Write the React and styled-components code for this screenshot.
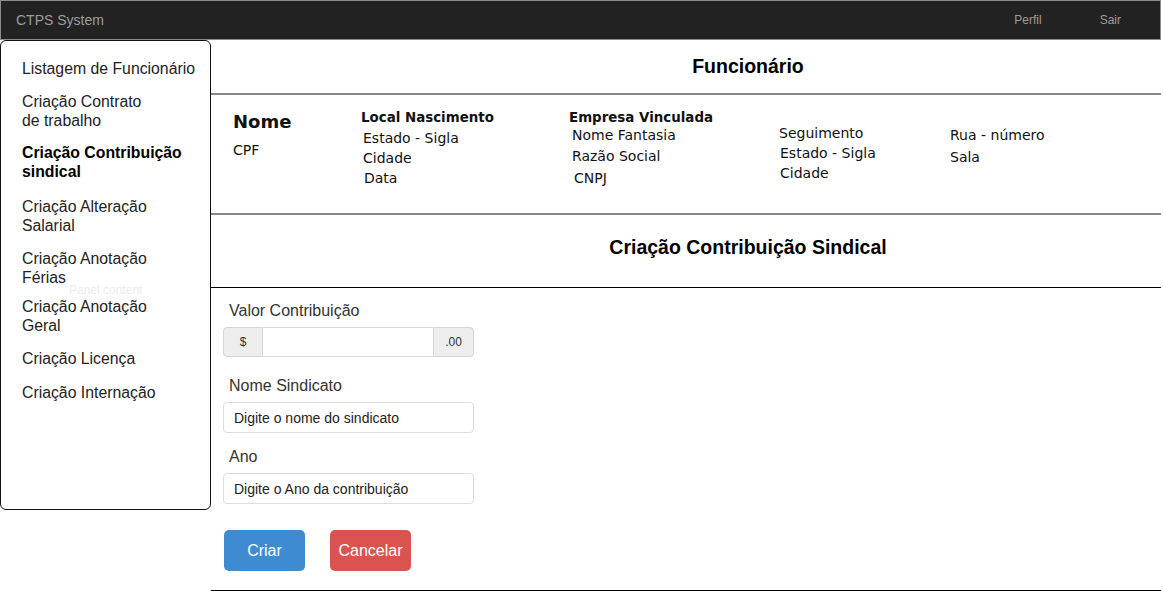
import React from 'react';
import styled, { createGlobalStyle } from 'styled-components';

const Global = createGlobalStyle`
  html, body { margin: 0; padding: 0; background: #fff; }
  body { font-family: "Liberation Sans", Arial, sans-serif; }
  *, *::before, *::after { box-sizing: border-box; }
`;

const Page = styled.div`
  width: 1161px;
`;

const NavBar = styled.header`
  height: 40px;
  background: #222;
  border: 1px solid #8c8c8c;
  display: flex;
  align-items: center;
  padding: 0 39px 0 15px;
`;

const Brand = styled.span`
  flex: 1;
  color: #9d9d9d;
  font-size: 14px;
`;

const NavLinks = styled.nav`
  display: flex;
  gap: 58px;
`;

const NavLink = styled.span`
  color: #9d9d9d;
  font-size: 12px;
`;

const Body = styled.div`
  display: flex;
  align-items: flex-start;
`;

const Sidebar = styled.aside`
  position: relative;
  flex: 0 0 211px;
  height: 470px;
  border: 1px solid #111;
  border-radius: 6px;
  padding: 18px 0 0 21px;
  display: flex;
  flex-direction: column;
`;

const SideItem = styled.div`
  font-size: 15.8px;
  line-height: 19px;
  margin-top: ${p => p.$mt}px;
  color: ${p => (p.$active ? '#000' : '#222')};
  font-weight: ${p => (p.$active ? 700 : 400)};
`;

const Ghost = styled.span`
  position: absolute;
  left: 68px;
  top: 242px;
  font-size: 12px;
  color: #ececec;
`;

const Main = styled.main`
  flex: 1;
  display: flex;
  flex-direction: column;
`;

const SectionTitle = styled.h2`
  margin: 0;
  height: ${p => p.$h}px;
  padding: ${p => p.$pad}px 0 0 124px;
  text-align: center;
  font-size: 19.5px;
  line-height: 23px;
  font-weight: 700;
  color: #000;
  border-bottom: ${p => p.$border};
`;

const Info = styled.section`
  height: 120px;
  border-bottom: 2px solid #888;
  display: grid;
  grid-template-columns: 128px 208px 210px 171px 1fr;
  padding-left: 22px;
  font-family: "DejaVu Sans", Verdana, sans-serif;
  color: #111;
`;

const InfoCol = styled.div`
  display: flex;
  flex-direction: column;
  padding-top: ${p => p.$top}px;
`;

const InfoName = styled.div`
  font-size: 18px;
  font-weight: 700;
  line-height: 22px;
  margin-bottom: 7px;
`;

const InfoHead = styled.div`
  font-size: 13.4px;
  font-weight: 700;
  line-height: 20px;
`;

const InfoItem = styled.div`
  font-size: 14px;
  line-height: ${p => p.$lh || 20}px;
  padding-left: ${p => p.$indent || 0}px;
  margin-top: ${p => p.$shift || 0}px;
`;

const Form = styled.section`
  padding: 12px 0 19px 12px;
  border-bottom: 1px solid #000;
`;

const Field = styled.div`
  width: 251px;
  margin-bottom: ${p => p.$gap}px;
`;

const Label = styled.label`
  display: block;
  font-size: 16px;
  line-height: 22px;
  color: #333;
  padding-left: 6px;
  margin-bottom: ${p => p.$mb}px;
`;

const InputGroup = styled.div`
  display: flex;
  height: 30px;
`;

const Addon = styled.span`
  flex: 0 0 ${p => p.$w}px;
  display: flex;
  align-items: center;
  justify-content: center;
  background: #eee;
  border: 1px solid #d4d4d4;
  font-size: 12px;
  color: #333;
  border-radius: ${p => (p.$side === 'left' ? '4px 0 0 4px' : '0 4px 4px 0')};
`;

const GroupInput = styled.input`
  flex: 1;
  min-width: 0;
  border: 1px solid #d8d8d8;
  border-left: none;
  border-right: none;
  font: inherit;
  outline: none;
`;

const TextInput = styled.input`
  width: 100%;
  height: 31px;
  border: 1px solid #dcdcdc;
  border-radius: 4px;
  padding: 0 10px;
  font-family: "Liberation Sans", Arial, sans-serif;
  font-size: 14px;
  color: #222;
  outline: none;
  &::placeholder { color: #222; opacity: 1; }
`;

const Actions = styled.div`
  display: flex;
  gap: 25px;
  padding-left: 1px;
`;

const Button = styled.button`
  width: 81px;
  height: 41px;
  border: none;
  border-radius: 5px;
  font-family: "Liberation Sans", Arial, sans-serif;
  font-size: 16px;
  color: #fff;
  background: ${p => (p.$variant === 'danger' ? '#d9534f' : '#3f8bd0')};
  cursor: pointer;
`;

const menu = [
  { text: ['Listagem de Funcionário'], mt: 0 },
  { text: ['Criação Contrato', 'de trabalho'], mt: 14 },
  { text: ['Criação Contribuição', 'sindical'], active: true, mt: 13 },
  { text: ['Criação Alteração', 'Salarial'], mt: 16 },
  { text: ['Criação Anotação', 'Férias'], mt: 14 },
  { text: ['Criação Anotação', 'Geral'], mt: 10 },
  { text: ['Criação Licença'], mt: 14 },
  { text: ['Criação Internação'], mt: 15 },
];

export default function App() {
  return (
    <Page>
      <Global />
      <NavBar>
        <Brand>CTPS System</Brand>
        <NavLinks>
          <NavLink>Perfil</NavLink>
          <NavLink>Sair</NavLink>
        </NavLinks>
      </NavBar>
      <Body>
        <Sidebar>
          {menu.map((m, i) => (
            <SideItem key={i} $active={m.active} $mt={m.mt}>
              {m.text.map((t, j) => (
                <React.Fragment key={j}>
                  {j > 0 && <br />}
                  {t}
                </React.Fragment>
              ))}
            </SideItem>
          ))}
          <Ghost>Panel content</Ghost>
        </Sidebar>
        <Main>
          <SectionTitle $h={55} $pad={15} $border="2px solid #888">
            Funcionário
          </SectionTitle>
          <Info>
            <InfoCol $top={16}>
              <InfoName>Nome</InfoName>
              <InfoItem>CPF</InfoItem>
            </InfoCol>
            <InfoCol $top={13}>
              <InfoHead>Local Nascimento</InfoHead>
              <InfoItem $indent={2}>Estado - Sigla</InfoItem>
              <InfoItem $indent={2}>Cidade</InfoItem>
              <InfoItem $indent={3}>Data</InfoItem>
            </InfoCol>
            <InfoCol $top={13}>
              <InfoHead>Empresa Vinculada</InfoHead>
              <InfoItem $indent={3} $shift={-3}>Nome Fantasia</InfoItem>
              <InfoItem $indent={3} $shift={1}>Razão Social</InfoItem>
              <InfoItem $indent={5} $shift={2}>CNPJ</InfoItem>
            </InfoCol>
            <InfoCol $top={28}>
              <InfoItem>Seguimento</InfoItem>
              <InfoItem $indent={1}>Estado - Sigla</InfoItem>
              <InfoItem $indent={1}>Cidade</InfoItem>
            </InfoCol>
            <InfoCol $top={29}>
              <InfoItem $lh={22}>Rua - número</InfoItem>
              <InfoItem $lh={22}>Sala</InfoItem>
            </InfoCol>
          </Info>
          <SectionTitle $h={73} $pad={21} $border="1px solid #000">
            Criação Contribuição Sindical
          </SectionTitle>
          <Form>
            <Field $gap={18}>
              <Label $mb={5}>Valor Contribuição</Label>
              <InputGroup>
                <Addon $w={40} $side="left">$</Addon>
                <GroupInput type="text" />
                <Addon $w={41} $side="right">.00</Addon>
              </InputGroup>
            </Field>
            <Field $gap={13}>
              <Label $mb={5}>Nome Sindicato</Label>
              <TextInput type="text" placeholder="Digite o nome do sindicato" />
            </Field>
            <Field $gap={26}>
              <Label $mb={5}>Ano</Label>
              <TextInput type="text" placeholder="Digite o Ano da contribuição" />
            </Field>
            <Actions>
              <Button>Criar</Button>
              <Button $variant="danger">Cancelar</Button>
            </Actions>
          </Form>
        </Main>
      </Body>
    </Page>
  );
}
